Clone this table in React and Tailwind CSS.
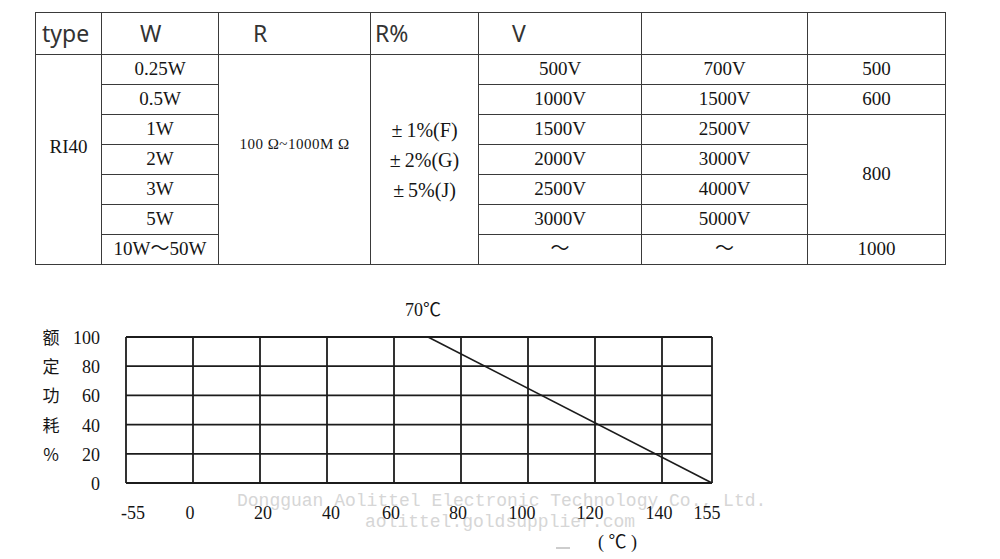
import React from 'react';

const serif = "font-['Liberation_Serif','Noto_Sans_CJK_SC',serif]";

// 表格数据：右侧三列
const rows = [
  { w: '0.25W', v1: '500V', v2: '700V', last: '500' },
  { w: '0.5W', v1: '1000V', v2: '1500V', last: '600' },
  { w: '1W', v1: '1500V', v2: '2500V', last: '800', span: 4 },
  { w: '2W', v1: '2000V', v2: '3000V' },
  { w: '3W', v1: '2500V', v2: '4000V' },
  { w: '5W', v1: '3000V', v2: '5000V' },
  { w: '10W～50W', v1: '～', v2: '～', last: '1000' },
];

function SpecTable() {
  const cell = 'border border-[#3a3a3a] p-0 text-center align-middle';
  const head = "border border-[#3a3a3a] p-0 text-left align-middle font-['Noto_Sans',sans-serif] text-[23px] font-normal text-[#333]";
  return (
    <table className={`ml-[35px] mt-[12px] w-[910px] table-fixed border-collapse ${serif} text-[19px] text-[#151515]`}>
      <colgroup>
        <col className="w-[66px]" />
        <col className="w-[117px]" />
        <col className="w-[152px]" />
        <col className="w-[108px]" />
        <col className="w-[163px]" />
        <col className="w-[166px]" />
        <col className="w-[138px]" />
      </colgroup>
      <thead>
        <tr className="h-[42px]">
          <th className={`${head} pl-[6px]`}>type</th>
          <th className={`${head} pl-[38px]`}>W</th>
          <th className={`${head} pl-[34px]`}>R</th>
          <th className={`${head} pl-[4px]`}>R%</th>
          <th className={`${head} pl-[33px]`}>V</th>
          <th className={head}></th>
          <th className={head}></th>
        </tr>
      </thead>
      <tbody>
        {rows.map((r, i) => (
          <tr key={i} className="h-[30px]">
            {i === 0 && (
              <td rowSpan={7} className={`${cell} !align-top pt-[78px]`}>RI40</td>
            )}
            <td className={cell}>{r.w}</td>
            {i === 0 && (
              <td rowSpan={7} className={`${cell} !align-top pt-[78px] text-[15px] tracking-[0.5px]`}>
                100 Ω~1000M Ω
              </td>
            )}
            {i === 0 && (
              <td rowSpan={7} className={`${cell} leading-[30px] text-[20px]`}>
                <div>±&thinsp;1%(F)</div>
                <div>±&thinsp;2%(G)</div>
                <div>±&thinsp;5%(J)</div>
              </td>
            )}
            <td className={cell}>{r.v1}</td>
            <td className={cell}>{r.v2}</td>
            {r.last && (
              <td rowSpan={r.span || 1} className={cell}>{r.last}</td>
            )}
          </tr>
        ))}
      </tbody>
    </table>
  );
}

// 降额曲线
function DeratingChart() {
  const xs = [126, 193, 260, 327, 394, 461, 528, 595, 662, 712];
  const ys = [337, 366.2, 395.4, 424.6, 453.8, 483];
  const yLabels = [
    ['额', '100'],
    ['定', '80'],
    ['功', '60'],
    ['耗', '40'],
    ['%', '20'],
    ['', '0'],
  ];
  const xLabels = [
    ['-55', 133],
    ['0', 190],
    ['20', 263],
    ['40', 331],
    ['60', 391],
    ['80', 458],
    ['100', 522],
    ['120', 590],
    ['140', 659],
    ['155', 707],
  ];
  return (
    <svg viewBox="0 275 1000 284" className="block h-[284px] w-[1000px] mt-[10px]">
      <g stroke="#1c1c1c" strokeWidth="1.8" fill="none">
        {xs.map((x) => (
          <line key={'v' + x} x1={x} y1={337} x2={x} y2={483} />
        ))}
        {ys.map((y) => (
          <line key={'h' + y} x1={126} y1={y} x2={712} y2={y} />
        ))}
        <line x1={428} y1={337} x2={712} y2={483} strokeWidth="1.6" />
      </g>

      {/* watermark */}
      <g fill="#d6d6d6" fontFamily="'Liberation Mono', monospace" fontSize="18">
        <text x={237} y={506}>Dongguan Aolittel Electronic Technology Co., Ltd.</text>
        <text x={365} y={527}>aolittel.goldsupplier.com</text>
      </g>
      <line x1={556} y1={548} x2={570} y2={548} stroke="#bdbdbd" strokeWidth="1.5" />

      <g fill="#151515" fontFamily="'Liberation Serif', 'Noto Sans CJK SC', serif" fontSize="18">
        <text x={405} y={316}>70℃</text>
        {yLabels.map(([c, n], i) => (
          <g key={n}>
            {c && (
              <text x={51} y={ys[i] + 7} textAnchor="middle" fontSize="17" fontFamily="'Noto Sans CJK SC', sans-serif">
                {c}
              </text>
            )}
            <text x={100} y={ys[i] + 7} textAnchor="end">{n}</text>
          </g>
        ))}
        {xLabels.map(([t, x]) => (
          <text key={t} x={x} y={519} textAnchor="middle">{t}</text>
        ))}
        <text x={598} y={548}>( ℃ )</text>
      </g>
    </svg>
  );
}

export default function App() {
  return (
    <div className="w-[1000px] h-[559px] overflow-hidden bg-white">
      <SpecTable />
      <DeratingChart />
    </div>
  );
}
